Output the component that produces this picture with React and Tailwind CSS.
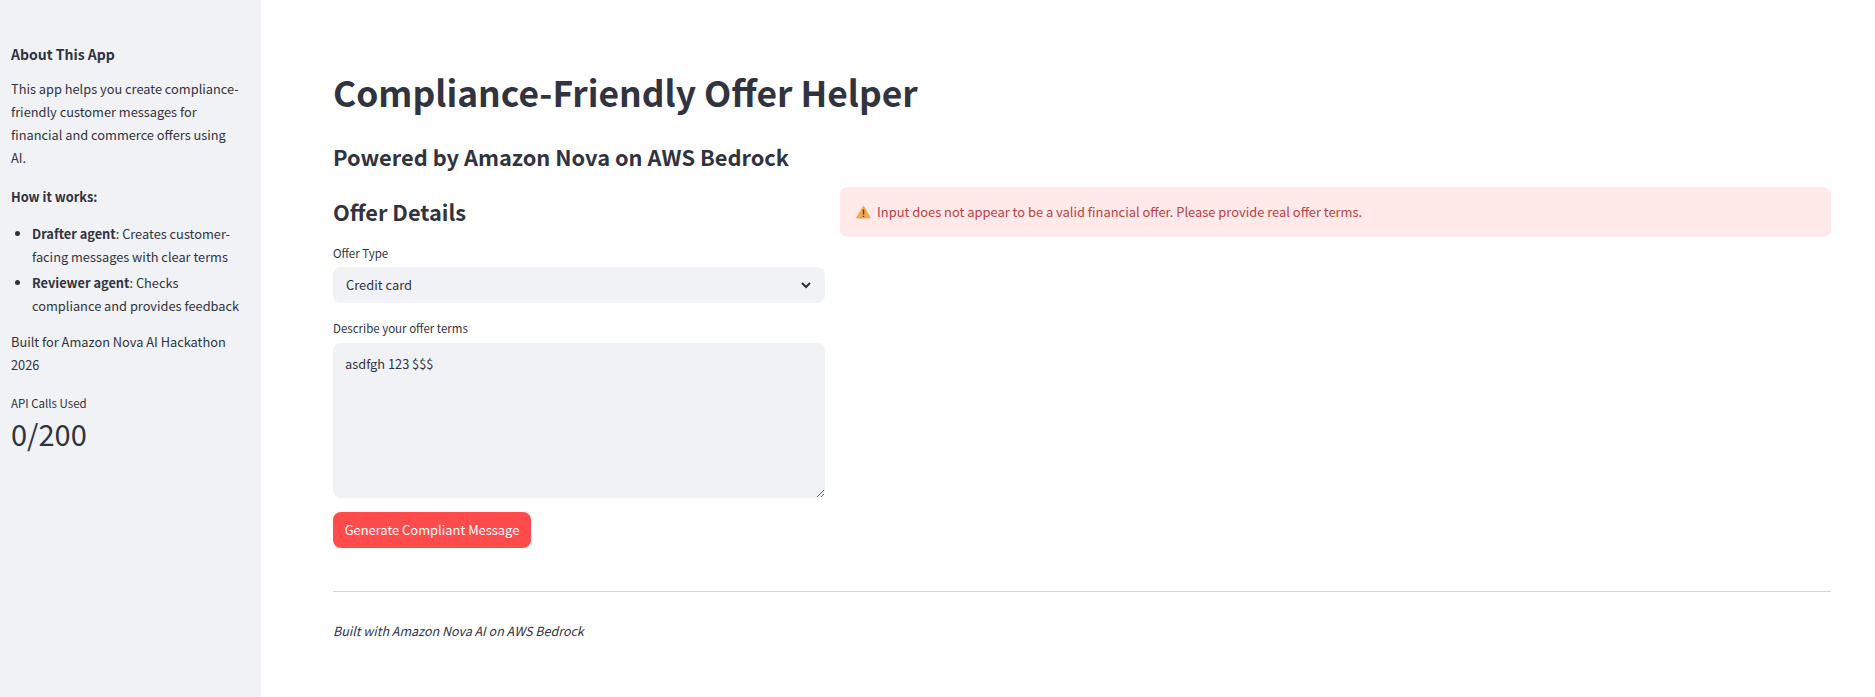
import React from "react";

export default function App() {
    return (
        <div className="flex min-h-[697px] bg-white text-[#31333f] font-['Noto_Sans_CJK_SC','Source_Sans_Pro',sans-serif]">
            {/* Sidebar */}
            <aside className="w-[261px] shrink-0 bg-[#f0f2f6] px-[11px] pt-[44px] text-[12.8px] leading-[23px]">
                <h3 className="text-[14px] leading-[20px] font-semibold">About This App</h3>
                <p className="mt-[13px] w-[232px]">This app helps you create compliance-friendly customer messages for financial and commerce offers using AI.</p>
                <p className="mt-[16px] font-semibold">How it works:</p>
                <ul className="mt-[14px] list-disc pl-[21px] w-[233px]">
                    <li><strong className="font-semibold">Drafter agent</strong>: Creates customer-facing messages with clear terms</li>
                    <li className="mt-[3px]"><strong className="font-semibold">Reviewer agent</strong>: Checks compliance and provides feedback</li>
                </ul>
                <p className="mt-[13px]">Built for Amazon Nova AI Hackathon 2026</p>
                <p className="mt-[19px] text-[11.5px] leading-[16px]">API Calls Used</p>
                <p className="mt-[2px] text-[29px] leading-[40px]">0/200</p>
            </aside>

            {/* Main */}
            <main className="flex-1 min-w-0 pl-[72px] pr-[44px] pt-[68px]">
                <h1 className="text-[35.4px] leading-[48px] font-bold">Compliance-Friendly Offer Helper</h1>
                <h2 className="mt-[25px] text-[21.8px] leading-[32px] font-semibold">Powered by Amazon Nova on AWS Bedrock</h2>

                <div className="mt-[14px] flex gap-[15px]">
                    <div className="w-[492px] shrink-0">
                        <h3 className="mt-[9px] text-[21.8px] leading-[32px] font-semibold">Offer Details</h3>

                        <label className="mt-[17px] block text-[11.5px] leading-[16px]">Offer Type</label>
                        <div className="mt-[6px] flex h-[36px] items-center justify-between rounded-lg bg-[#f0f2f6] pl-[13px] pr-[11px] text-[12.9px]">
                            <span>Credit card</span>
                            <svg width="16" height="16" viewBox="0 0 24 24" fill="none" stroke="#31333f" strokeWidth="3">
                                <path d="M6 9l6 6 6-6" />
                            </svg>
                        </div>

                        <label className="mt-[17px] block text-[11.5px] leading-[16px]">Describe your offer terms</label>
                        <textarea
                            readOnly
                            value="asdfgh 123 $$$"
                            className="mt-[7px] block h-[155px] w-full rounded-lg bg-[#f0f2f6] px-[12px] py-[10px] text-[12.8px] leading-[22px] outline-none"
                        />

                        <button className="mt-[14px] block h-[36px] w-[198px] rounded-lg bg-[#ff4b4b] text-[12.9px] text-white">Generate Compliant Message</button>
                    </div>

                    <div className="flex-1 min-w-0">
                        <div className="flex h-[50px] items-center gap-[6px] rounded-lg bg-[#ffe9e9] px-[16px] text-[12.9px] text-[#bd4043]">
                            <svg width="15" height="14" viewBox="0 0 15 14">
                                <path d="M7.5 1L14.4 13H0.6Z" fill="#f5a94a" stroke="#f0a040" strokeWidth="0.8" strokeLinejoin="round" />
                                <path d="M7.5 4.5V9.5M7.5 10.7V12" stroke="#4a3a2a" strokeWidth="1.4" />
                            </svg>
                            <span>Input does not appear to be a valid financial offer. Please provide real offer terms.</span>
                        </div>
                    </div>
                </div>

                <hr className="mt-[43px] border-t border-[#d5d6da]" />
                <p className="mt-[28px] text-[12.5px] leading-[22px] italic">Built with Amazon Nova AI on AWS Bedrock</p>
            </main>
        </div>
    );
}
